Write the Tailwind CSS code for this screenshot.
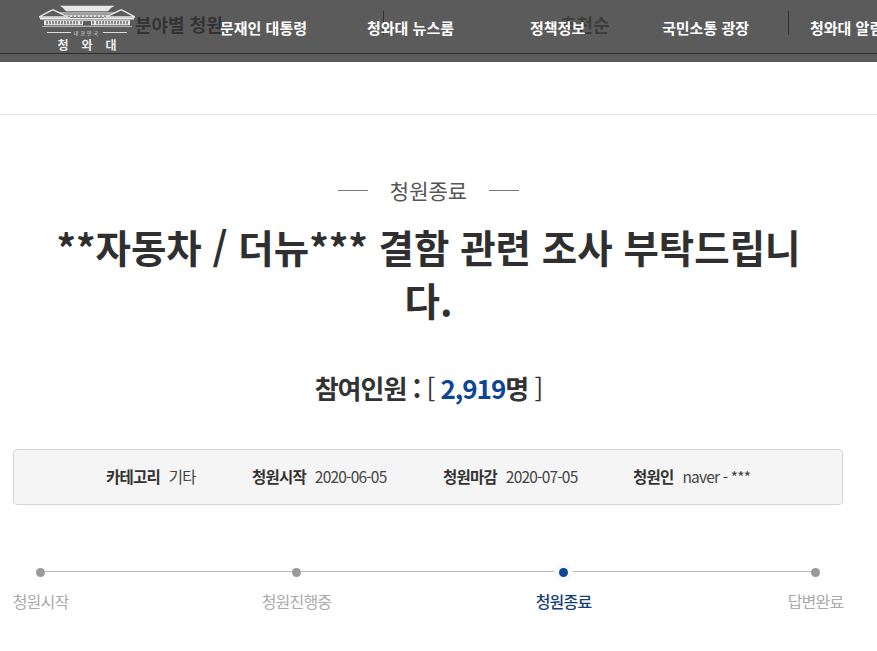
<!DOCTYPE html>
<html lang="ko">
<head>
<meta charset="utf-8"/>
<meta content="width=device-width, initial-scale=1" name="viewport"/>
<title>청원종료</title>
<script src="https://cdn.jsdelivr.net/npm/@tailwindcss/browser@4"></script>
</head>
<body class="bg-white overflow-hidden font-['Noto_Sans_CJK_KR','Noto_Sans',sans-serif] text-[#333]">
  <!-- Top nav -->
  <header class="relative h-[62px] bg-[#5b5b5b] overflow-hidden">
    <div class="relative h-[54px] border-b border-[#2e2e2e]">
      <!-- page text showing through the nav -->
      <span class="absolute left-[135px] top-[11px] text-[18px] leading-[26px] font-bold text-[#333]">분야별 청원</span>
      <span class="absolute left-[560px] top-[11px] text-[18px] leading-[26px] font-bold text-[#3d3d3d]">추천순</span>
      <span class="absolute left-[383px] top-[11px] w-px h-[24px] bg-[#333]"></span>
      <span class="absolute left-[788px] top-[11px] w-px h-[24px] bg-[#333]"></span>

      <div class="absolute left-[39px] top-[4px] w-[96px] flex flex-col items-center">
        <svg width="96" height="26" viewBox="0 0 96 32" preserveAspectRatio="none" fill="none">
          <path d="M21 2 L76 2 L72 5 L69 9 L27 9 L24 5 Z" fill="#e6e6e6"/>
          <path d="M21 10 H75 V12 H21 Z" fill="#bdbdbd"/>
          <path d="M0 16 L9 10 L14 7 L19 10 L29 16 Z" fill="none" stroke="#e6e6e6" stroke-width="1.6"/>
          <path d="M67 16 L77 10 L82 7 L87 10 L96 16 Z" fill="none" stroke="#e6e6e6" stroke-width="1.6"/>
          <path d="M1 17 H95 V19 H1 Z" fill="#efefef"/>
          <path d="M5 20 H91 V26 H5 Z" fill="#e8e8e8"/>
          <path d="M8 21 V25 M11 21 V25 M14 21 V25 M17 21 V25 M20 21 V25 M23 21 V25 M26 21 V25 M29 21 V25 M32 21 V25 M35 21 V25 M38 21 V25 M42 21 V25 M54 21 V25 M58 21 V25 M61 21 V25 M64 21 V25 M67 21 V25 M70 21 V25 M73 21 V25 M76 21 V25 M79 21 V25 M82 21 V25 M85 21 V25 M88 21 V25" stroke="#4a4a4a" stroke-width="1.2"/>
          <path d="M44 21 H52 V26 H44 Z" fill="#5b5b5b"/>
          <path d="M26 13 H70 V16 H26 Z" fill="#dcdcdc"/>
          <path d="M30 14 V16 M34 14 V16 M38 14 V16 M42 14 V16 M46 14 V16 M50 14 V16 M54 14 V16 M58 14 V16 M62 14 V16 M66 14 V16" stroke="#4a4a4a"/>
          <path d="M3 27 H93 V28 H3 Z" fill="#cfcfcf"/>
        </svg>
        <div class="flex items-center gap-[3px] h-[5px]">
          <span class="w-[24px] h-px bg-[#ddd]"></span>
          <span class="text-[5px] leading-[5px] tracking-[2px] text-[#ddd]">대한민국</span>
          <span class="w-[24px] h-px bg-[#ddd]"></span>
        </div>
        <div class="flex gap-[13px] text-[12px] leading-[14px] font-bold text-[#eee] mt-[3px]">
          <span>청</span><span>와</span><span>대</span>
        </div>
      </div>

      <nav class="absolute left-[220px] top-[17px] flex text-[15px] leading-[22px] font-bold text-white whitespace-nowrap">
        <a class="w-[147px]">문재인 대통령</a>
        <a class="w-[163px]">청와대 뉴스룸</a>
        <a class="w-[132px]">정책정보</a>
        <a class="w-[148px]">국민소통 광장</a>
        <a>청와대 알림</a>
      </nav>
    </div>
  </header>

  <div class="h-[53px] border-b border-[#e5e5e5]"></div>

  <main class="w-[857px] flex flex-col items-center">
    <div class="mt-[59px] flex items-center gap-[22px] h-[32px]">
      <span class="w-[30px] h-px bg-[#777]"></span>
      <span class="text-[21px] leading-[32px] text-[#555]">청원종료</span>
      <span class="w-[30px] h-px bg-[#777]"></span>
    </div>

    <h1 class="mt-[14px] w-[760px] text-center break-all text-[38.5px] leading-[53px] font-bold text-[#2f2f2f]">**자동차 / 더뉴*** 결함 관련 조사 부탁드립니다.</h1>

    <p class="mt-[43px] text-[26px] leading-[38px] font-bold text-[#333] tracking-[-1px]">참여인원 : <span class="font-normal">[</span> <span class="text-[#0b4596]">2,919</span>명 <span class="font-normal">]</span></p>

    <!-- petition info -->
    <div class="mt-[42px] ml-[-1px] w-[830px] h-[56px] rounded-[4px] border border-[#d5d5d5] bg-[#f5f5f5] flex items-center pl-[92px] text-[15.5px] tracking-[-0.8px] text-[#444]">
      <span class="w-[146px] flex gap-[9px]"><b class="text-[#333]">카테고리</b>기타</span>
      <span class="w-[191px] flex gap-[9px]"><b class="text-[#333]">청원시작</b>2020-06-05</span>
      <span class="w-[190px] flex gap-[9px]"><b class="text-[#333]">청원마감</b>2020-07-05</span>
      <span class="flex gap-[9px]"><b class="text-[#333]">청원인</b>naver - ***</span>
    </div>

    <!-- progress -->
    <div class="relative mt-[59px] ml-[-1px] w-[831px] flex justify-between">
      <span class="absolute left-[27px] right-[27px] top-[7px] h-px bg-[#bbb]"></span>
      <div class="relative flex flex-col items-center w-[56px] gap-[12px]">
        <span class="w-[9px] h-[9px] rounded-full bg-[#999] mt-[4px]"></span>
        <span class="text-[16px] leading-[24px] whitespace-nowrap tracking-[-0.8px] text-[#aaa]">청원시작</span>
      </div>
      <div class="absolute left-[249px] flex flex-col items-center w-[70px] gap-[12px]">
        <span class="w-[9px] h-[9px] rounded-full bg-[#999] mt-[4px]"></span>
        <span class="text-[16px] leading-[24px] whitespace-nowrap tracking-[-0.8px] text-[#aaa]">청원진행중</span>
      </div>
      <div class="absolute left-[523px] flex flex-col items-center w-[56px] gap-[12px]">
        <span class="w-[9px] h-[9px] rounded-full bg-[#0b4596] mt-[4px] shadow-[0_0_0_5px_#f7f9fc]"></span>
        <span class="text-[16px] leading-[24px] font-medium whitespace-nowrap tracking-[-0.8px] text-[#123f78]">청원종료</span>
      </div>
      <div class="relative flex flex-col items-center w-[56px] gap-[12px]">
        <span class="w-[9px] h-[9px] rounded-full bg-[#999] mt-[4px]"></span>
        <span class="text-[16px] leading-[24px] whitespace-nowrap tracking-[-0.8px] text-[#aaa]">답변완료</span>
      </div>
    </div>
  </main>
</body>
</html>
